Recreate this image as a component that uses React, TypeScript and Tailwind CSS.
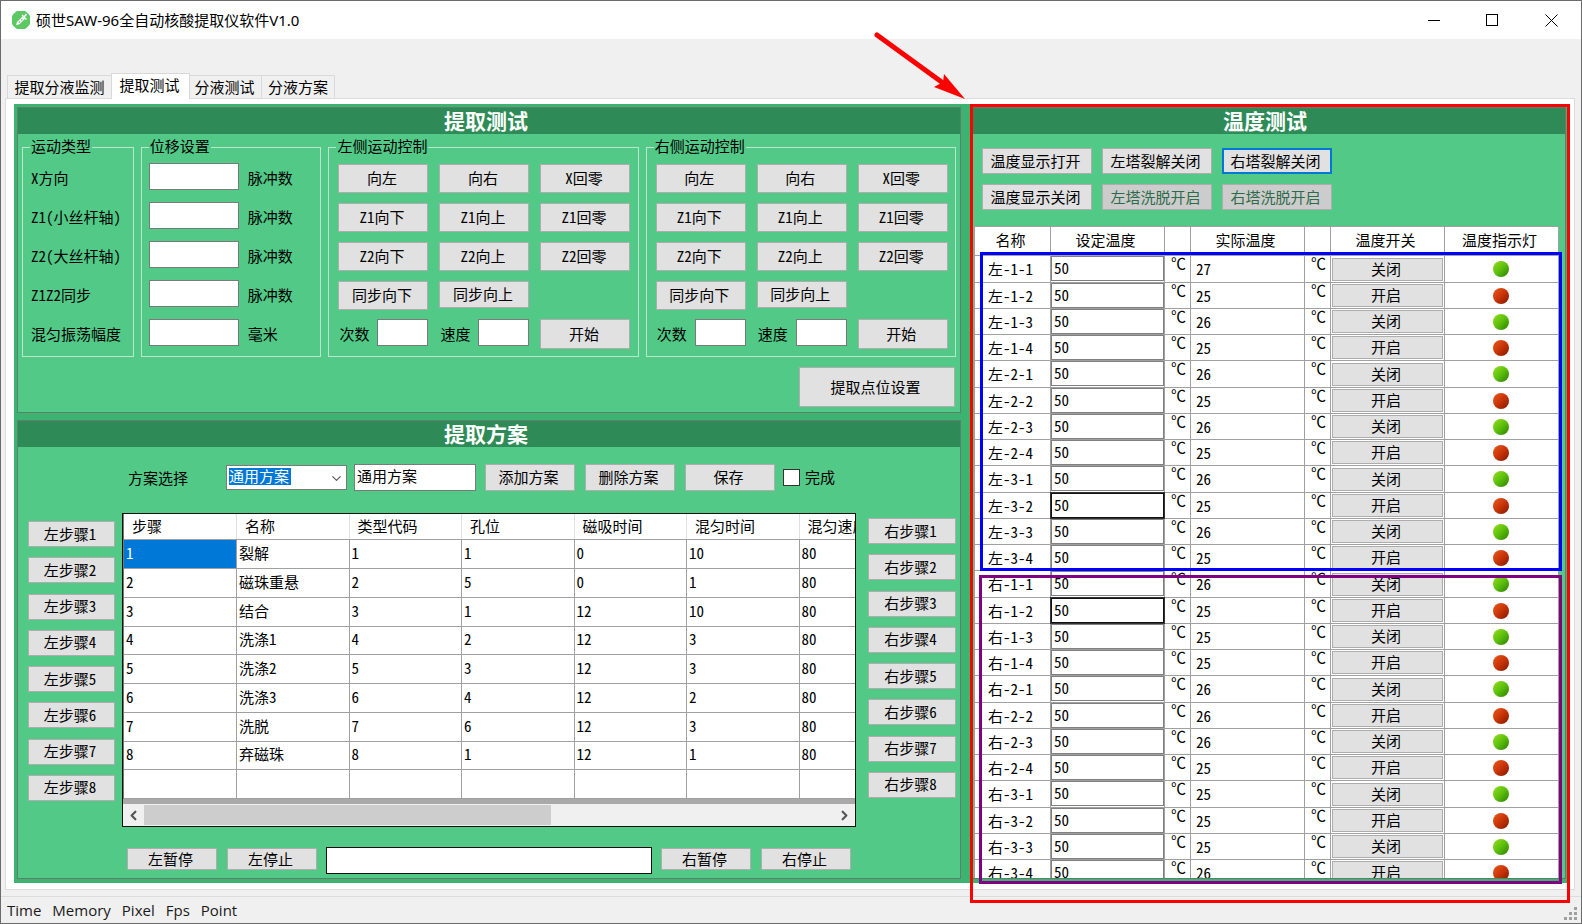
import type { ButtonHTMLAttributes, ReactNode } from "react";
import { ChevronDown, ChevronLeft, ChevronRight } from "lucide-react";

const axisLabels = ["X方向", "Z1(小丝杆轴)", "Z2(大丝杆轴)", "Z1Z2同步", "混匀振荡幅度"];
const units = ["脉冲数", "脉冲数", "脉冲数", "脉冲数", "毫米"];
const moves = ["向左", "向右", "X回零", "Z1向下", "Z1向上", "Z1回零", "Z2向下", "Z2向上", "Z2回零", "同步向下", "同步向上"];
const steps = [1, 2, 3, 4, 5, 6, 7, 8];
const planHeads = ["步骤", "名称", "类型代码", "孔位", "磁吸时间", "混匀时间", "混匀速度"];
const planRows = [
  ["1", "裂解", "1", "1", "0", "10", "80"],
  ["2", "磁珠重悬", "2", "5", "0", "1", "80"],
  ["3", "结合", "3", "1", "12", "10", "80"],
  ["4", "洗涤1", "4", "2", "12", "3", "80"],
  ["5", "洗涤2", "5", "3", "12", "3", "80"],
  ["6", "洗涤3", "6", "4", "12", "2", "80"],
  ["7", "洗脱", "7", "6", "12", "3", "80"],
  ["8", "弃磁珠", "8", "1", "12", "1", "80"],
  ["", "", "", "", "", "", ""],
];
const temps: [string, number][] = [
  ["左-1-1", 27], ["左-1-2", 25], ["左-1-3", 26], ["左-1-4", 25],
  ["左-2-1", 26], ["左-2-2", 25], ["左-2-3", 26], ["左-2-4", 25],
  ["左-3-1", 26], ["左-3-2", 25], ["左-3-3", 26], ["左-3-4", 25],
  ["右-1-1", 26], ["右-1-2", 25], ["右-1-3", 25], ["右-1-4", 25],
  ["右-2-1", 26], ["右-2-2", 26], ["右-2-3", 26], ["右-2-4", 25],
  ["右-3-1", 25], ["右-3-2", 25], ["右-3-3", 25], ["右-3-4", 26],
];
const darkFields = ["左-3-2", "右-1-2"];

function Btn({ className = "", ...rest }: ButtonHTMLAttributes<HTMLButtonElement>) {
  return (
    <button
      type="button"
      className={`flex items-center justify-center border border-[#adadad] bg-[#e1e1e1] pr-[3px] pb-px whitespace-nowrap leading-5 disabled:bg-[#cccccc] disabled:text-[#2e6b4a] ${className}`}
      {...rest}
    />
  );
}

function Panel({ title, className = "", children }: { title: string; className?: string; children: ReactNode }) {
  return (
    <section className={`flex flex-col overflow-hidden border border-[#5f7f6c] bg-[#52c987] ${className}`}>
      <h2 className="flex h-[26px] shrink-0 items-center justify-center bg-[#2e8b57] pr-[6px] pb-[2px] text-[21px] leading-6 font-bold text-white">{title}</h2>
      {children}
    </section>
  );
}

function Group({ title, className = "", children }: { title: string; className?: string; children: ReactNode }) {
  return (
    <fieldset className={`h-[220px] min-w-0 border border-[#b9e6cc] px-[7px] ${className}`}>
      <legend className="px-px pb-[3px] leading-[17px]">{title}</legend>
      {children}
    </fieldset>
  );
}

function MotionGroup({ title, side }: { title: string; side: string }) {
  return (
    <Group title={title} className="w-[311px]">
      <div className="grid grid-cols-[90px_90px_90px] gap-x-[11px] gap-y-[9px] pt-[6px] pl-[2px]">
        {moves.map((m) => (
          <div key={m} className="flex h-[30px] items-center">
            <Btn className={m === "同步向上" ? "mb-[2px] h-[27px] w-full" : "h-[29px] w-full"}>{m}</Btn>
          </div>
        ))}
        <div />
        <label htmlFor={`${side}-count`} className="flex h-[30px] items-center justify-between pl-px">
          次数
          <input id={`${side}-count`} className="mb-[3px] h-[27px] w-[51px] border border-[#7a7a7a] bg-white px-1" />
        </label>
        <label htmlFor={`${side}-speed`} className="flex h-[30px] items-center justify-between pl-px">
          速度
          <input id={`${side}-speed`} className="mb-[3px] h-[27px] w-[51px] border border-[#7a7a7a] bg-white px-1" />
        </label>
        <Btn className="h-[30px]">开始</Btn>
      </div>
    </Group>
  );
}

function TestPanel() {
  return (
    <Panel title="提取测试" className="h-[306px]">
      <div className="flex gap-[7px] px-1 pt-[3px]">
        <Group title="运动类型" className="w-[112px]">
          <div className="flex flex-col gap-[9px] pt-[6px] pl-px">
            {axisLabels.map((l, i) => (
              <label key={l} htmlFor={`axis-${i}`} className="flex h-[30px] items-center pb-px whitespace-nowrap">{l}</label>
            ))}
          </div>
        </Group>
        <Group title="位移设置" className="w-[181px]">
          <div className="flex flex-col gap-[9px] pt-[6px]">
            {units.map((u, i) => (
              <div key={i} className="flex h-[30px] items-center gap-[9px]">
                <input id={`axis-${i}`} className="mb-[3px] h-[27px] w-[90px] border border-[#7a7a7a] bg-white px-1" />
                <span className="pb-px">{u}</span>
              </div>
            ))}
          </div>
        </Group>
        <MotionGroup title="左侧运动控制" side="left" />
        <MotionGroup title="右侧运动控制" side="right" />
      </div>
      <Btn className="mt-[10px] mr-[5px] h-10 w-[156px] self-end">提取点位设置</Btn>
    </Panel>
  );
}

function PlanTable() {
  return (
    <div className="flex h-[314px] w-[734px] flex-col border border-[#111] bg-[#a9a9a9]">
      <div className="overflow-hidden border-l border-[#777]">
        <table className="w-[788px] table-fixed border-collapse bg-white text-left">
          <thead>
            <tr className="h-[25px]">
              {planHeads.map((h) => (
                <th key={h} className="border-r border-b border-r-[#e0e0e0] border-b-[#a0a0a0] p-0 pl-[8px] leading-5 font-normal">{h}</th>
              ))}
            </tr>
          </thead>
          <tbody>
            {planRows.map((row, r) => (
              <tr key={r} className="h-[29px] [&:nth-child(4n)]:h-[28px]">
                {row.map((c, i) => (
                  <td key={i} className={r === 0 && i === 0 ? "border-r border-b border-[#a0a0a0] bg-[#0078d7] p-0 pb-[2px] pl-[2px] leading-5 text-white" : "border-r border-b border-[#a0a0a0] p-0 pb-[2px] pl-[2px] leading-5"}>{c}</td>
                ))}
              </tr>
            ))}
          </tbody>
        </table>
      </div>
      <div className="mt-auto flex h-[22px] items-center bg-[#f0f0f0]">
        <button type="button" aria-label="向左滚动" className="flex h-full w-[21px] items-center justify-center"><ChevronLeft size={15} strokeWidth={3.5} color="#555" /></button>
        <div className="h-[20px] w-[407px] bg-[#cdcdcd]" />
        <button type="button" aria-label="向右滚动" className="ml-auto flex h-full w-[21px] items-center justify-center"><ChevronRight size={15} strokeWidth={3.5} color="#555" /></button>
      </div>
    </div>
  );
}

function PlanPanel() {
  return (
    <Panel title="提取方案" className="h-[459px]">
      <div className="flex items-center pt-[17px] pl-[110px]">
        <label htmlFor="plan" className="w-[98px]">方案选择</label>
        <div className="relative h-[25px] w-[121px]">
          <select id="plan" className="h-full w-full appearance-none border border-[#7a7a7a] bg-white bg-[linear-gradient(#0078d7,#0078d7)] bg-[length:62px_17px] bg-[position:2px_2px] bg-no-repeat pb-[3px] pl-[2px] leading-5 text-white">
            <option>通用方案</option>
          </select>
          <ChevronDown size={15} strokeWidth={1.8} color="#555" className="pointer-events-none absolute top-[6px] right-[3px]" />
        </div>
        <input aria-label="方案名称" defaultValue="通用方案" className="ml-[7px] h-[27px] w-[122px] border border-[#7a7a7a] bg-white px-[2px] pb-[4px] leading-5" />
        <Btn className="ml-[9px] h-[27px] w-[90px]">添加方案</Btn>
        <Btn className="ml-[10px] h-[27px] w-[90px]">删除方案</Btn>
        <Btn className="ml-[10px] h-[27px] w-[90px]">保存</Btn>
        <label className="ml-2 flex items-center gap-[5px]">
          <input type="checkbox" className="size-[17px] appearance-none border border-[#333] bg-white checked:bg-[#0078d7]" />
          <span className="pb-[2px]">完成</span>
        </label>
      </div>
      <div className="flex items-start pt-[22px] pl-[10px]">
        <div className="mt-2 flex h-[280px] flex-col justify-between">
          {steps.map((s) => <Btn key={s} className="h-[26px] w-[87px]">{`左步骤${s}`}</Btn>)}
        </div>
        <div className="ml-[7px]"><PlanTable /></div>
        <div className="mt-[5px] ml-3 flex h-[280px] flex-col justify-between">
          {steps.map((s) => <Btn key={s} className="h-[26px] w-[88px]">{`右步骤${s}`}</Btn>)}
        </div>
      </div>
      <div className="flex items-start pt-[20px] pl-[109px]">
        <Btn className="mt-px h-[22px] w-[90px]">左暂停</Btn>
        <Btn className="mt-px ml-[10px] h-[22px] w-[90px]">左停止</Btn>
        <input aria-label="运行信息" className="ml-[9px] h-[27px] w-[326px] border border-[#111] bg-white px-1" />
        <Btn className="mt-px ml-[9px] h-[22px] w-[90px]">右暂停</Btn>
        <Btn className="mt-px ml-[10px] h-[22px] w-[90px]">右停止</Btn>
      </div>
    </Panel>
  );
}

function TempPanel() {
  const cell = "border border-[#a0a0a0] p-0";
  return (
    <Panel title="温度测试" className="h-[772px]">
      <div className="grid w-fit grid-cols-[110px_110px_110px] gap-[10px] pt-[14px] pl-[11px]">
        <Btn className="h-[26px]">温度显示打开</Btn>
        <Btn className="h-[26px]">左塔裂解关闭</Btn>
        <Btn className="h-[26px] outline-2 -outline-offset-2 outline-[#0078d7]">右塔裂解关闭</Btn>
        <Btn className="h-[26px]">温度显示关闭</Btn>
        <Btn className="h-[26px]" disabled>左塔洗脱开启</Btn>
        <Btn className="h-[26px]" disabled>右塔洗脱开启</Btn>
      </div>
      <div className="mt-4 mr-[6px] ml-[3px]">
        <table className="w-full table-fixed border-collapse bg-white">
          <colgroup>
            <col className="w-[76px]" />
            <col className="w-[114px]" />
            <col className="w-[26px]" />
            <col className="w-[114px]" />
            <col className="w-[26px]" />
            <col className="w-[114px]" />
            <col />
          </colgroup>
          <thead>
            <tr className="h-[29px]">
              {["名称", "设定温度", "", "实际温度", "", "温度开关", "温度指示灯"].map((h, i) => (
                <th key={i} className={`${cell} pr-1 pb-[2px] leading-5 font-normal`}>{h}</th>
              ))}
            </tr>
          </thead>
          <tbody>
            {temps.map(([name, value], i) => {
              const closed = i % 2 === 0;
              return (
                <tr key={name} className="h-[26px] [&:nth-child(4n+1)]:h-[27px]">
                  <td className={`${cell} pl-[13px] leading-5`}>{name}</td>
                  <td className={`${cell} align-top`}>
                    <input
                      aria-label={`${name} 设定温度`}
                      defaultValue="50"
                      className={`block h-[25px] w-full border bg-white pb-[3px] pl-[2px] leading-5 ${darkFields.includes(name) ? "border-[#111] outline outline-[#333]" : "border-[#808080]"}`}
                    />
                  </td>
                  <td className={`${cell} pl-[2px] text-center align-top leading-[14px]`}>℃</td>
                  <td className={`${cell} pl-[5px] leading-5`}>{value}</td>
                  <td className={`${cell} pl-[2px] text-center align-top leading-[14px]`}>℃</td>
                  <td className={`${cell} px-px`}>
                    <Btn className="h-[23px] w-full">{closed ? "关闭" : "开启"}</Btn>
                  </td>
                  <td className={`${cell} pr-px`}>
                    <div className={closed ? "mx-auto size-4 rounded-full bg-linear-to-br from-[#94e01c] via-[#5cbf0c] to-[#2a7f00]" : "mx-auto size-4 rounded-full bg-linear-to-br from-[#e85a1c] via-[#c93408] to-[#7f1800]"} />
                  </td>
                </tr>
              );
            })}
          </tbody>
        </table>
      </div>
    </Panel>
  );
}

function TitleBar() {
  return (
    <header className="flex h-[38px] items-center bg-white pl-[10px]">
      <svg width="20" height="20" viewBox="0 0 20 20" aria-hidden="true">
        <path d="M6 1H14L16 2.5L17.5 4L19 6V14L17.5 16L16 17.5L14 19H6L4 17.5L2.5 16L1 14V6L2.5 4L4 2.5Z" fill="#5cc863" />
        <path d="M5 15L6 12L11.5 6.5L14 8.8L8.5 14.2Z" fill="#fff" />
        <path d="M11 5L15.5 9.5M13.5 6.5L15.5 4" stroke="#fff" strokeWidth="1.4" />
        <path d="M8 12.5L9 11.5M10.3 10.3L11.3 9.3" stroke="#5cc863" strokeWidth="1.4" />
      </svg>
      <h1 className="ml-[5px] font-['Noto_Sans','Noto_Sans_CJK_SC',sans-serif] text-[15px] leading-5">硕世SAW-96全自动核酸提取仪软件V1.0</h1>
      <div className="ml-auto flex h-full">
        <button type="button" aria-label="最小化" className="flex w-[58px] items-center justify-center">
          <svg width="13" height="13" stroke="#000" fill="none"><path d="M0 6.5H12" /></svg>
        </button>
        <button type="button" aria-label="最大化" className="flex w-[59px] items-center justify-center">
          <svg width="13" height="13" stroke="#000" fill="none"><rect x="0.5" y="0.5" width="11" height="11" /></svg>
        </button>
        <button type="button" aria-label="关闭窗口" className="flex w-[59px] items-center justify-center">
          <svg width="13" height="13" stroke="#000" fill="none"><path d="M0.5 0.5L12.5 12.5M12.5 0.5L0.5 12.5" /></svg>
        </button>
      </div>
    </header>
  );
}

export default function App() {
  const tab = "flex h-[23px] items-center justify-center border border-b-0 border-[#d9d9d9] leading-5";
  return (
    <div className="relative flex min-h-screen flex-col overflow-hidden border border-[#6b6b6b] bg-[#f0f0f0] font-['Noto_Sans_Mono_CJK_SC','Liberation_Sans','Noto_Sans_CJK_SC',sans-serif] text-[15px] leading-5 text-black">
      <TitleBar />
      <nav className="mt-[34px] flex items-end pl-[6px]">
        <button type="button" className={`${tab} w-[104px] border-r-0`}>提取分液监测</button>
        <button type="button" className="z-10 -mb-px flex h-[26px] w-[79px] items-center justify-center border border-b-0 border-[#d9d9d9] bg-white pr-[2px] pb-1 leading-5">提取测试</button>
        <button type="button" className={`${tab} w-[72px] border-l-0 pr-[2px]`}>分液测试</button>
        <button type="button" className={`${tab} w-[73px] border-l-0`}>分液方案</button>
      </nav>
      <div className="mr-[6px] ml-1 border border-[#dcdcdc] bg-white pt-[5px] pr-1 pb-[6px] pl-2">
        <main className="grid grid-cols-[944px_minmax(0,1fr)] gap-[9px] bg-[#3cb371] pt-[3px] pr-[4px] pb-[4px] pl-[3px]">
          <div className="flex flex-col gap-[7px]">
            <TestPanel />
            <PlanPanel />
          </div>
          <TempPanel />
        </main>
      </div>
      <footer className="mt-[6px] flex flex-1 items-center gap-[11px] border-t border-[#dcdcdc] pl-[6px] font-['Open_Sans',sans-serif] text-[15px] leading-5 text-[#1a1a1a]">
        <span>Time</span>
        <span>Memory</span>
        <span>Pixel</span>
        <span>Fps</span>
        <span>Point</span>
        <svg width="13" height="13" fill="#a0a0a0" className="mr-1 mb-[3px] ml-auto self-end" aria-hidden="true">
          <path d="M10 0h3v3h-3zM10 5h3v3h-3zM10 10h3v3h-3zM5 5h3v3H5zM5 10h3v3H5zM0 10h3v3H0z" />
        </svg>
      </footer>

      <div className="pointer-events-none absolute top-[103px] left-[969px] h-[799px] w-[600px] border-3 border-[#ff0000]" />
      <div className="pointer-events-none absolute top-[251px] left-[979px] h-[319px] w-[582px] border-3 border-[#0000ff]" />
      <div className="pointer-events-none absolute top-[574px] left-[978px] h-[309px] w-[583px] border-3 border-[#800080]" />
      <svg width="96" height="72" className="pointer-events-none absolute top-[30px] left-[871px]" aria-hidden="true">
        <path d="M5 4L71 52" stroke="#f00" strokeWidth="5" strokeLinecap="round" />
        <path d="M93 68L72 43L71 51L62 56Z" fill="#f00" />
      </svg>
    </div>
  );
}
